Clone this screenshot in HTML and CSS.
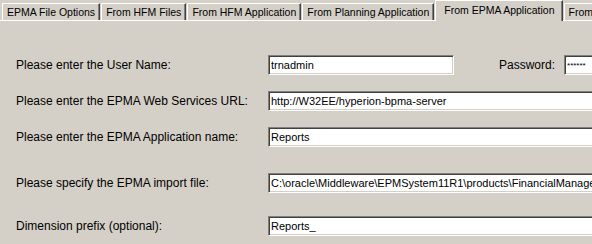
FILE: index.html
```html
<!DOCTYPE html>
<html lang="en">
<head>
    <meta charset="UTF-8">
    <title>EPMA Import Options</title>
    <link rel="stylesheet" href="styles.css">
</head>
<body>
    <div class="tabs">
        <div class="tab">EPMA File Options</div>
        <div class="tab">From HFM Files</div>
        <div class="tab">From HFM Application</div>
        <div class="tab">From Planning Application</div>
        <div class="tab active">From EPMA Application</div>
        <div class="tab">From Essbase Application</div>
    </div>

    <div class="panel">
        <div class="row row-first">
            <label class="label">Please enter the User Name:</label>
            <div class="field">
                <input class="input input-short" type="text" value="trnadmin">
                <label class="pass-label">Password:</label>
                <input class="input input-pass" type="text" value="******">
            </div>
        </div>
        <div class="row">
            <label class="label">Please enter the EPMA Web Services URL:</label>
            <input class="input input-long" type="text" value="http://W32EE/hyperion-bpma-server">
        </div>
        <div class="row">
            <label class="label">Please enter the EPMA Application name:</label>
            <input class="input input-long" type="text" value="Reports">
        </div>
        <div class="row row-wide">
            <label class="label">Please specify the EPMA import file:</label>
            <input class="input input-long" type="text" value="C:\oracle\Middleware\EPMSystem11R1\products\FinancialManagement\Sample Apps">
        </div>
        <div class="row row-last">
            <label class="label">Dimension prefix (optional):</label>
            <input class="input input-long" type="text" value="Reports_">
        </div>
    </div>
</body>
</html>
```

FILE: styles.css
```css
body {
    margin: 0;
    width: 592px;
    height: 244px;
    overflow: hidden;
    background-color: #d4d0c8;
    font-family: "Liberation Sans", Arial, sans-serif;
    color: #000;
}
.tabs {
    display: flex;
    align-items: flex-end;
    height: 20px;
    padding-left: 2px;
    white-space: nowrap;
}
.tab {
    box-sizing: border-box;
    height: 17px;
    margin-right: 1px;
    padding: 2px 4px 0 4px;
    font-size: 10.5px;
    line-height: 12px;
    border-top: 1px solid #fff;
    border-left: 1px solid #fff;
    border-right: 1px solid #404040;
    box-shadow: inset -1px 0 #808080;
}
.tab.active {
    position: relative;
    z-index: 1;
    height: 21px;
    margin: 0 1px -1px 0;
    padding: 3px 7px 0 8px;
    background-color: #d4d0c8;
}
.panel {
    border-top: 1px solid #fff;
}
.row {
    display: flex;
    align-items: center;
    height: 20px;
    margin-top: 16px;
}
.row-first {
    margin-top: 34px;
}
.row-wide {
    margin-top: 26px;
}
.row-last {
    margin-top: 23px;
}
.label {
    width: 268px;
    flex-shrink: 0;
    padding-left: 16px;
    box-sizing: border-box;
    font-size: 12px;
    white-space: nowrap;
}
.field {
    display: flex;
    align-items: center;
}
.pass-label {
    font-size: 12px;
    padding-left: 45px;
    margin-right: 9px;
}
.input {
    box-sizing: border-box;
    height: 20px;
    margin: 0;
    padding: 0 2px;
    flex-shrink: 0;
    font-family: "Liberation Sans", Arial, sans-serif;
    font-size: 11px;
    color: #000;
    background-color: #fff;
    border-top: 1px solid #808080;
    border-left: 1px solid #808080;
    border-bottom: 1px solid #fff;
    border-right: 1px solid #fff;
    box-shadow: inset 1px 1px #404040, inset -1px -1px #d4d0c8;
    outline: none;
}
.input-short {
    width: 186px;
}
.input-pass {
    width: 120px;
    font-size: 8px;
}
.input-long {
    width: 420px;
}
```
